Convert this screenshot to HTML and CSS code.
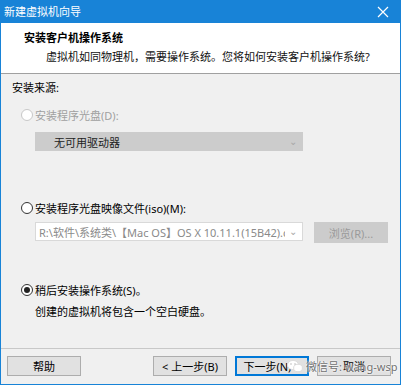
FILE: index.html
```html
<!DOCTYPE html>
<html lang="zh-CN">
<head>
<meta charset="UTF-8">
<title>新建虚拟机向导</title>
<link rel="stylesheet" href="styles.css">
</head>
<body>
    <div class="window">
        <div class="titlebar">
            <span class="title">新建虚拟机向导</span>
            <span class="close">
                <svg width="12" height="12" viewBox="0 0 12 12"><path d="M1 1 L11 11 M11 1 L1 11" stroke="#fff" stroke-width="1.2"/></svg>
            </span>
        </div>

        <div class="header">
            <div class="head-title">安装客户机操作系统</div>
            <div class="head-sub">虚拟机如同物理机，需要操作系统。您将如何安装客户机操作系统?</div>
        </div>

        <div class="content">
            <div class="group-label">安装来源:</div>

            <div class="option disabled">
                <span class="radio"></span>
                <span>安装程序光盘(D):</span>
            </div>
            <div class="select disabled-select">
                <span>无可用驱动器</span>
                <span class="arrow">&#8964;</span>
            </div>

            <div class="option iso">
                <span class="radio"></span>
                <span>安装程序光盘映像文件(iso)(M):</span>
            </div>
            <div class="iso-row">
                <div class="select path">
                    <span class="path-text">R:\软件\系统类\【Mac OS】OS X 10.11.1(15B42).cdr</span>
                    <span class="arrow">&#8964;</span>
                </div>
                <div class="btn btn-disabled">浏览(R)...</div>
            </div>

            <div class="option later">
                <span class="radio checked"></span>
                <span>稍后安装操作系统(S)。</span>
            </div>
            <div class="note">创建的虚拟机将包含一个空白硬盘。</div>
        </div>

        <div class="footer">
            <div class="btn">帮助</div>
            <div class="footer-right">
                <div class="btn">&lt; 上一步(B)</div>
                <div class="btn btn-default">下一步(N) &gt;</div>
                <div class="btn">取消</div>
            </div>
            <div class="watermark">
                <svg width="16" height="14" viewBox="0 0 16 14"><ellipse cx="6" cy="6" rx="5.5" ry="4.6" fill="#fff" stroke="#ddd"/><ellipse cx="11" cy="9" rx="4.4" ry="3.7" fill="#fff" stroke="#ddd"/><circle cx="4" cy="5" r="0.8" fill="#bbb"/><circle cx="8" cy="5" r="0.8" fill="#bbb"/></svg>
                <span>微信号: wang-wsp</span>
            </div>
        </div>
    </div>
</body>
</html>
```

FILE: styles.css
```css
* {
    box-sizing: border-box;
}
body {
    margin: 0;
    font-family: "Noto Sans", "Noto Sans CJK SC", sans-serif;
    font-size: 11px;
    color: #000;
    background: #fff;
}
.window {
    width: 401px;
    height: 385px;
    border: 1px solid #1883d7;
    border-top: none;
    background: #f0f0f0;
    display: flex;
    flex-direction: column;
}
.titlebar {
    height: 23px;
    margin: 0 -1px;
    background: #1883d7;
    color: #fff;
    display: flex;
    align-items: center;
    justify-content: space-between;
    padding: 0 0 0 4px;
}
.title {
    font-size: 11px;
    line-height: 23px;
}
.close {
    width: 34px;
    display: flex;
    justify-content: center;
    padding-right: 2px;
}
.header {
    height: 51px;
    background: #fff;
    border-bottom: 1px solid #a0a0a0;
    padding: 6px 0 0 23px;
}
.head-title {
    font-weight: bold;
    line-height: 17px;
}
.head-sub {
    padding-left: 22px;
    margin-top: 2px;
    line-height: 17px;
    color: #111;
}
.content {
    flex: 1;
    padding: 4px 0 0 11px;
}
.group-label {
    line-height: 20px;
}
.option {
    display: flex;
    align-items: center;
    gap: 2px;
    height: 18px;
    margin-left: 9px;
}
.option.disabled {
    margin-top: 8px;
    color: #a0a0a0;
}
.option.iso {
    margin-top: 48px;
}
.option.later {
    margin-top: 38px;
}
.radio {
    width: 12px;
    height: 12px;
    border: 1px solid #333;
    border-radius: 50%;
    background: #fff;
    position: relative;
}
.disabled .radio {
    border-color: #c8c8c8;
}
.radio.checked::after {
    content: "";
    position: absolute;
    left: 2px;
    top: 2px;
    width: 6px;
    height: 6px;
    border-radius: 50%;
    background: #222;
}
.select {
    display: flex;
    align-items: center;
    justify-content: space-between;
    height: 19px;
    padding: 0 6px 0 19px;
}
.disabled-select {
    width: 268px;
    margin: 8px 0 0 23px;
    background: #cccccc;
    color: #222;
}
.arrow {
    color: #a8a8a8;
    font-size: 10px;
    line-height: 8px;
    height: 10px;
}
.iso-row {
    display: flex;
    align-items: flex-start;
    gap: 11px;
    margin: 5px 0 0 23px;
}
.path {
    width: 268px;
    background: #fff;
    border: 1px solid #d9d9d9;
    padding: 0 5px 0 3px;
    color: #8a8a8a;
}
.path-text {
    white-space: nowrap;
    overflow: hidden;
    width: 246px;
}
.btn {
    width: 74px;
    height: 20px;
    background: #e1e1e1;
    border: 1px solid #adadad;
    display: flex;
    align-items: center;
    justify-content: center;
    white-space: nowrap;
}
.btn-disabled {
    height: 21px;
    background: #cccccc;
    border-color: #cccccc;
    color: #9a9a9a;
}
.note {
    margin: 4px 0 0 23px;
    line-height: 18px;
}
.footer {
    height: 36px;
    border-top: 1px solid #c8c8c8;
    display: flex;
    justify-content: space-between;
    align-items: flex-start;
    padding: 7px 9px 0 6px;
    position: relative;
}
.footer-right {
    display: flex;
    gap: 8px;
}
.btn-default {
    border: 1px solid #0078d7;
    box-shadow: inset 0 0 0 1px #0078d7;
}
.watermark {
    position: absolute;
    left: 286px;
    top: 9px;
    display: flex;
    align-items: center;
    gap: 3px;
    color: #707070;
    white-space: nowrap;
    text-shadow: 0 0 2px #fff, 0 0 2px #fff;
}
```
